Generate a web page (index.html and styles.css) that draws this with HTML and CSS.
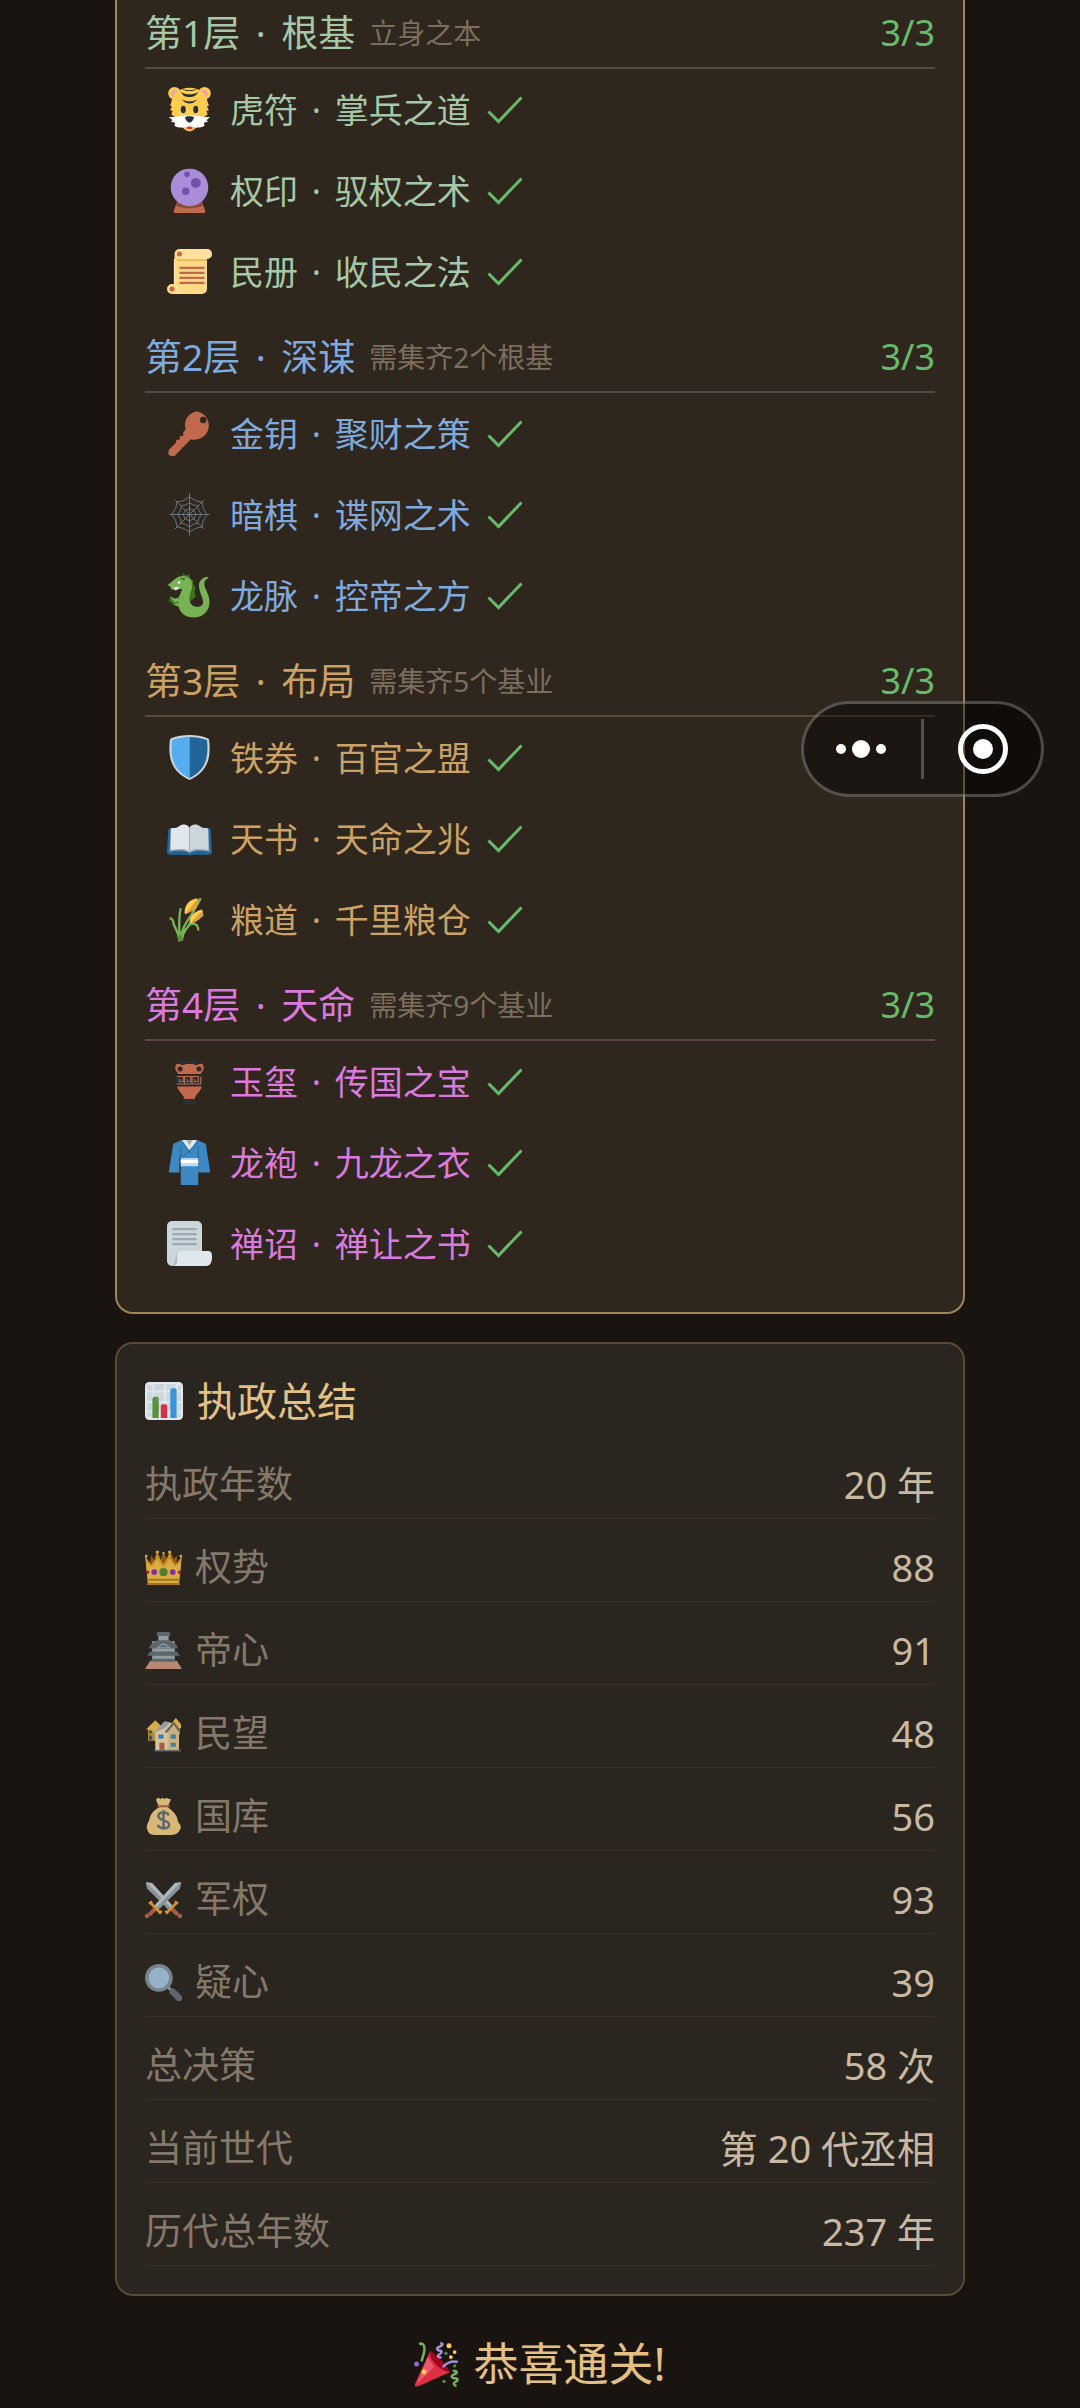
FILE: index.html
```html
<!DOCTYPE html>
<html lang="zh-CN">
<head>
<meta charset="utf-8">
<meta name="viewport" content="width=device-width, initial-scale=1">
<title>恭喜通关</title>
<link rel="stylesheet" href="styles.css">
</head>
<body>
<svg class="defs" aria-hidden="true">
  <symbol id="check" viewBox="0 0 36 28"><path d="M1.5 15.500 11.500 25.500 34.500 1.500" fill="none" stroke="currentColor" stroke-width="3"/></symbol>
  <symbol id="tiger" viewBox="0 0 36 36">
    <circle cx="6" cy="5" r="5" fill="#FFCC4D"/><circle cx="30" cy="5" r="5" fill="#FFCC4D"/>
    <circle cx="6.500" cy="5.500" r="3.300" fill="#E6AAAA"/><circle cx="29.500" cy="5.500" r="3.300" fill="#E6AAAA"/>
    <path d="M18 .5C10 .5 4.500 5 3.500 12L2.500 15l1.500.5-1.500 3 2 .5-1 3 3 2c3 6 8 11.500 11.500 11.500S26.500 30 29.500 24l3-2-1-3 2-.5-1.500-3 1.500-.5-1-3C31.500 5 26 .5 18 .5z" fill="#FFCC4D"/>
    <path d="M1.500 24C8 24 14 22.500 18 22.500S28 24 34.500 24l-3 2.500 1.500 1-3.500 1 .5 2.500C25 34 21 31.500 18 31.500S11 34 6 31l.5-2.500-3.500-1 1.500-1z" fill="#fff"/>
    <path d="M14.500 24.500c0-1.500 7-1.500 7 0S19 28.500 18 28.500s-3.500-2.500-3.500-4z" fill="#292F33"/>
    <path d="M15.500 33c1-2 4-2 5 0-1.500 1-3.500 1-5 0z" fill="#DD2E44"/>
    <ellipse cx="13" cy="18" rx="2" ry="3" fill="#292F33"/><ellipse cx="23" cy="18" rx="2" ry="3" fill="#292F33"/>
    <path d="M12 1c2 2 10 2 12 0-1 3-11 3-12 0zM11 4c4 2.500 10 2.500 14 0-2 3.500-4 4-7 4s-5-.5-7-4zm1 6c4 2 8 2 12 0-2 2.500-4 3.200-6 3.200s-4-.7-6-3.200z" fill="#292F33"/>
  </symbol>
  <symbol id="orb" viewBox="0 0 36 36">
    <path d="M8 27h20l2.500 7c.5 1 0 2-1 2h-23c-1 0-1.500-1-1-2z" fill="#C1694F"/><path d="M8 27h20l1 3c-7 3-15 3-22 0z" fill="#8A4B38"/>
    <circle cx="18" cy="15.500" r="15" fill="#AA8DD8"/><circle cx="16" cy="5" r="2.200" fill="#7450A8"/><circle cx="23" cy="12" r="4" fill="#7450A8"/><circle cx="15" cy="18.500" r="3" fill="#7450A8"/>
  </symbol>
  <symbol id="scroll" viewBox="0 0 36 36">
    <path d="M6 4a4 4 0 0 1 4-4h22a4 4 0 0 1 0 8v24a4 4 0 0 1-4 4H4a4 4 0 0 1 0-8h2z" fill="#FFD983"/>
    <path d="M10 0h22a4 4 0 0 1 0 8H10z" fill="#FFE8B6" opacity=".5"/><path d="M8 8h24v1.500H8z" fill="#E39F3D" opacity=".6"/>
    <circle cx="10" cy="4" r="2" fill="#C1694F"/><circle cx="4" cy="32" r="2" fill="#C1694F"/>
    <path d="M6 8v20c2 1 3 3 1.500 7" fill="none" stroke="#FFE8B6"/>
    <path d="M10 15h20M10 19h20M10 23h20M10 27h20" stroke="#C1694F" stroke-width="1.800"/>
  </symbol>
  <symbol id="key" viewBox="0 0 36 36">
    <path fill-rule="evenodd" d="M25 .5a10.500 10.500 0 0 0-10 14L13 17v3h-2.500l-.5 3H7.500L7 25.500 1.500 31 1 34.500 3 36h3l13-13.500A10.800 10.800 0 1 0 25 .5zm4 4a2.600 2.600 0 1 1 0 5.200 2.600 2.600 0 0 1 0-5.200z" fill="#C1694F"/>
  </symbol>
  <symbol id="web" viewBox="0 0 36 36">
    <g fill="none" stroke="#66757F" stroke-width=".8">
      <path d="M18 1v34M2 18h32M6.500 6.500l23 23M29.500 6.500l-23 23"/>
      <path d="M18 4q5 4 10 4 0 5 4 10-4 5-4 10-5 0-10 4-5-4-10-4 0-5-4-10 4-5 4-10 5 0 10-4zM18 8.500q3 2.500 6.500 2.500 0 3.500 3 7-3 3.500-3 7-3.500 0-6.500 3-3-3-6.500-3 0-3.500-3-7 3-3.500 3-7 3.500 0 6.500-2.500zM18 13q2 1.500 3.500 1.500 0 1.500 2 3.500-2 2-2 3.500-1.500 0-3.500 2-2-2-3.500-2 0-1.500-2-3.500 2-2 2-3.500 1.500 0 3.500-1.500z"/>
    </g>
  </symbol>
  <symbol id="dragon" viewBox="0 0 36 36">
    <path d="M9 4l1-2 2 1 1-3 2 2 3-1v3l3 2v3l2 3-1 3 1 4-7 6z" fill="#3E721D"/>
    <path d="M4 24c-1-1-3-1-3-3 1 0 1 1 2 1-1-1-1-2 0-3 2 1 4 1 6 3l1 5c-2 0-5-1-6-3z" fill="#3E721D"/>
    <path d="M.5 9C4 8 6 3 12 2.500c6-.5 9 4 8 9-.5 3-2.500 6-2 10 .5 4 4 6 7.500 5.500 3-.5 4-3 3-6-1-4-3-7-3-11 0-3 2-6 6.500-7l1.500 1c-3 1-4 3-3.500 6 .5 3 3.500 7 4 12 .5 7-4 13.500-12 13.500-9 0-13-5-13-12 0-6 3-8 3-11l-6 1c-2 0-3-1-3-2z" fill="#77B255"/>
    <path d="M5 11l5 .5-3 2.500z" fill="#fff"/><circle cx="9.500" cy="7.500" r="1" fill="#fff"/><path d="M10 4l5 0-1.500 2z" fill="#3E721D"/>
    <path d="M2 18.500l4 2 3-1 1 3-4 1zM5 25l4-1 1 3z" fill="#77B255"/>
  </symbol>
  <symbol id="shield" viewBox="0 0 36 36">
    <path d="M18 0C13 0 8 1 3.500 2.500c-.7.300-1 .7-1.200 1.500C.8 18 3 29 18 36 33 29 35.200 18 33.700 4c-.1-.8-.5-1.200-1.200-1.500C28 1 23 0 18 0z" fill="#CCD6DD"/>
    <path d="M18 1.500C13 1.500 9 2.300 4 4 2.500 18 5 28 18 34.500z" fill="#55ACEE"/><path d="M18 1.500c5 0 9 .8 14 2.500 1.500 14-1 24-14 30.500z" fill="#226699"/>
  </symbol>
  <symbol id="book" viewBox="0 0 36 36">
    <path d="M3 9.500 1 10.500 0 29q0 2 3 2h13q2 1 4 0h13q3 0 3-2L35 10.500l-2-1z" fill="#226699"/>
    <path d="M3 11.500c4-2 10-1 15 1v17c-5-2.500-10-2-16-1z" fill="#99AAB5"/><path d="M33 11.500c-4-2-10-1-15 1v17c5-2.500 10-2 16-1z" fill="#99AAB5"/>
    <path d="M3 10c2-1 4 0 6-1.500 4-3 8-1.500 9 1v19c-4-3-9-2-14-1.500-1 0-1-.5-1-1z" fill="#E1E8ED"/><path d="M33 10c-2-1-4 0-6-1.500-4-3-8-1.500-9 1v19c4-3 9-2 14-1.500 1 0 1-.5 1-1z" fill="#CCD6DD"/>
    <path d="M18 9.500v20" stroke="#99AAB5" stroke-width=".7"/>
  </symbol>
  <symbol id="grain" viewBox="0 0 36 36">
    <path d="M10 35C9 25 5 24 5 20c0-2-2-3-3-3M10 34c0-10-1-18 1-25M11 34c1-12 7-16 11-24l5-9M12 34c1-8 6-12 9-14l8-6M17 22c5-1 8-1 8 5" fill="none" stroke="#77B255" stroke-width="1.900"/>
    <path d="M8.500 31l3-1 1.500 5-4 1z" fill="#5C913B"/>
    <path d="M14 13C14 6 18 2 24 1c2 4-1 10-9 12.500zM18 21c0-6 4-9.500 10-11 2 4-2 9-9 11z" fill="#FFCC4D"/>
    <path d="M15 13C18 9 21 6 25 1c1 5-2 10-10 12zM19 21c3-4 6-7 10-10 0 5-3 8-10 10z" fill="#E39F3D"/>
  </symbol>
  <symbol id="amphora" viewBox="0 0 36 36">
    <path d="M12 1h12v3h-3v2h-6V4h-3zM13 32h10l1 4H12z" fill="#292F33"/>
    <path d="M15 4h6c1 1 3 1 5 0 3-1 4 2 3 5l-2 3H9L7 9C6 6 7 3 10 4c2 1 4 1 5 0zM8 22h20c-1 4-5 6-6 10h-8c-1-4-5-6-6-10z" fill="#C1694F"/>
    <circle cx="10.500" cy="8" r="2" fill="#2f251d"/><circle cx="25.500" cy="8" r="2" fill="#2f251d"/>
    <path d="M7.500 13h21v8h-21z" fill="#292F33"/>
    <path d="M8 14h5v4h-3v-2m-2 4h6v-6h5v4h-3v-2m-2 4h6v-6h5v4h-3v-2m-2 4h7v-6" fill="none" stroke="#C1694F" stroke-width=".9"/>
  </symbol>
  <symbol id="robe" viewBox="0 0 36 36">
    <path d="M12 0 5 3 1.500 25q0 1 1 1H10V14h15v12h8.500q1 0 1-1L31 3l-7-3z" fill="#3B88C3"/>
    <path d="M11 1h14v35H11z" fill="#3B88C3"/><path d="M12 0h12l-6 9z" fill="#E1E8ED"/><path d="M15.500 0h5L18 4z" fill="#99AAB5"/>
    <path d="M25 1.500 13 13M12 1.500l7 9M11 5v13M25 5v13" stroke="#226699" fill="none" stroke-width=".8"/>
    <path d="M11 14.500h14V21H11z" fill="#BBDDF5"/><path d="M11 16h14v2.500H11z" fill="#fff"/>
  </symbol>
  <symbol id="paper" viewBox="0 0 36 36">
    <path d="M28 4a4 4 0 0 0-4-4H4a4 4 0 0 0-4 4v28a4 4 0 0 0 4 4h24V4z" fill="#CCD6DD"/>
    <path d="M8 27q0-3 4-3h21c2 0 3 1.500 3 4s0 8-5 8H4c4-1 3-6 4-9z" fill="#E1E8ED"/><path d="M8 27q0-3 2-3c-4 0-2 9-6 12 6 0 4-6 4-9z" fill="#99AAB5" opacity=".6"/>
    <path d="M5 6.500h18M5 10.500h18M5 14.500h18M5 18.500h18" stroke="#99AAB5" stroke-width="1.800" stroke-linecap="round"/>
  </symbol>
  <symbol id="chart" viewBox="0 0 36 36">
    <rect width="36" height="36" rx="4" fill="#E1E8ED"/>
    <path d="M2 3h5v5H2zM9 2h9v6H9zM20 2h9v6h-9zM31 3h3v5h-3zM2 10h5v8H2zM9 10h9v8H9zM20 10h9v8h-9zM31 10h3v8h-3zM2 20h5v7H2zM9 20h9v7H9zM20 20h9v7h-9zM31 20h3v7h-3zM2 29h5v4H2zM31 29h3v4h-3z" fill="#CCD6DD"/>
    <path d="M7 34V16q0-2 2-2h2q2 0 2 2v18z" fill="#5C913B"/><path d="M15 34V23q0-2 2-2h2q2 0 2 2v11z" fill="#DD2E44"/><path d="M24 34V8q0-2 2-2h2q2 0 2 2v26z" fill="#3B94D9"/>
  </symbol>
  <symbol id="crown" viewBox="0 0 36 36">
    <path d="M5 14 6 6l3 5 2-7 4 7 3-8 4 8 3-8 3 7 3-4v10z" fill="#A56A12"/>
    <path d="M3 34 0 7l6 8 4-5 2-7 3 7 3 5 3-5 3-7 2 7 4 5 6-8-3 27z" fill="#F4A92D"/><path d="M3 34 1 13l6 4 5-7 6 8 6-8 5 7 6-4-2 21z" fill="#FFCC4D"/>
    <path d="M2 29h32v2H2zM2 33h32v2H2z" fill="#C8811C"/>
    <g fill="#FFCC4D"><circle cx="1" cy="7" r="1.400"/><circle cx="12" cy="3" r="1.600"/><circle cx="24" cy="3" r="1.600"/><circle cx="35" cy="7" r="1.400"/><circle cx="18" cy="4" r="1.200"/></g>
    <circle cx="18" cy="22.500" r="4" fill="#5C913B"/><circle cx="9" cy="22.500" r="2.700" fill="#9C2FB0"/><circle cx="27" cy="22.500" r="2.700" fill="#9C2FB0"/><circle cx="2.500" cy="22.500" r="1.700" fill="#BE1931"/><circle cx="33.500" cy="22.500" r="1.700" fill="#BE1931"/>
  </symbol>
  <symbol id="castle" viewBox="0 0 36 36">
    <path d="M5 28h26l5 8H0z" fill="#D79E84"/><path d="M7 9h22v20H7z" fill="#AAB8C2"/><path d="M13 2h10v8H13z" fill="#AAB8C2"/>
    <path d="M12 0h12l1 4H11zM12 8h12l7 5 1 3H4l1-3zM5 19h26l3 4H2zM7 26h22l1 3H6z" fill="#66757F"/>
    <path d="M11 15l7-4 7 4z" fill="#CCD6DD"/><path d="M13 14.500l5-2.500 5 2.500z" fill="#66757F"/>
  </symbol>
  <symbol id="houses" viewBox="0 0 36 36">
    <path d="M3 13h8v12H3zM26 10h8v9h-8z" fill="#D4A93B"/><path d="M1 14 10 5l7 7-6 5-3 0-4-3zM26 8l4-5 5 6v4h-5z" fill="#FFCC4D"/>
    <path d="M4 15h3v3H4zM4 20h3v4H4z" fill="#226699"/>
    <path d="M10 17 20 7l6 1 7 9v18H10z" fill="#FFE8B6"/><path d="M22 14l5-6 6 9v18H22z" fill="#F2CF8C"/>
    <path d="M9 17 19 6l6 1-6 6" fill="#AAB8C2"/><path d="M20 17l8-9 6 8" fill="none" stroke="#66757F" stroke-width="2"/>
    <path d="M13 19h5v4h-5zM25 19h5v4h-5zM25 27h5v4h-5z" fill="#3B94D9"/><path d="M14 27h5v7h-5z" fill="#C1694F"/><path d="M9 34h26v1.500H9z" fill="#66757F"/>
  </symbol>
  <symbol id="money" viewBox="0 0 36 36">
    <path d="M11 1q2-2 4 0 2-2 4 0 2-2 4 0 2-1 2 1l-3 7c6 4 10 9 10 14 2 2 4 5 2 8q-2 5-8 5H9q-6 0-7-6c-1-3 1-6 2-8 1-6 4-10 10-13l-3-6z" fill="#FDD888"/>
    <path d="M12 7h12v2H12z" fill="#BF6952"/>
    <path d="M23 17c-1-4-10-4-10 .5 0 5 10.500 3.500 10.500 8.500 0 4.500-10 4.500-11 0M18 12v19" fill="none" stroke="#67757F" stroke-width="2.400"/>
  </symbol>
  <symbol id="swords" viewBox="0 0 36 36">
    <g id="sword"><path d="M1 1l6 1 20 22-4 4L2 7z" fill="#CCD6DD"/><path d="M1 1l24 25-2 2L2 7z" fill="#99AAB5"/><path d="M26 27l6 6" stroke="#BF6952" stroke-width="4"/><path d="M22 30l8-8M20 29l2 3M29 20l3 2" stroke="#FFAC33" stroke-width="2.500"/><circle cx="34" cy="34" r="2.200" fill="#C1694F"/></g>
    <use href="#sword" transform="matrix(-1 0 0 1 36 0)"/>
  </symbol>
  <symbol id="lens" viewBox="0 0 36 36">
    <path d="M22 22l4 4" stroke="#99AAB5" stroke-width="3"/><path d="M27 27l6 6" stroke="#66757F" stroke-width="6.500" stroke-linecap="round"/>
    <circle cx="13.500" cy="13.500" r="13.500" fill="#8899A6"/><circle cx="13.500" cy="13.500" r="10" fill="#AED2EE"/>
  </symbol>
  <symbol id="party" viewBox="0 0 36 36">
    <path d="M13 7 1 33c-1 2 0 3 2 2.500L29 24z" fill="#DD2E44"/><path d="M13 7c5 3 12 10 16 17C22 24 11 14 13 7z" fill="#A0041E"/><path d="M11 12 2 34l14-14z" fill="#EA596E"/>
    <path d="M4 1.500c4-1 5 2 4 7l-2 7" fill="none" stroke="#77B255" stroke-width="2"/>
    <path d="M21 1c3 0 2 2-1 3s-1 3 1 3 1 2-1 3 0 3 2 2" fill="none" stroke="#AA8DD8" stroke-width="2"/>
    <path d="M23 20c4-4 8-5 12-4" fill="none" stroke="#AA8DD8" stroke-width="2"/>
    <path d="M31 23c4 0 4 2 1 3s-2 3 1 3 2 2 0 3-1 3 1 3" fill="none" stroke="#77B255" stroke-width="2"/>
    <circle cx="2" cy="17.500" r="2" fill="#9266CC"/><g fill="#FFCC4D"><circle cx="28" cy="3" r="2"/><circle cx="32.500" cy="8" r="1.500"/><circle cx="29.500" cy="12" r="1.500"/><circle cx="8" cy="24" r="2"/></g>
    <g fill="#5C913B"><circle cx="25.500" cy="9" r="1.300"/><circle cx="32.500" cy="19" r="1.300"/><circle cx="24" cy="31.500" r="1.300"/></g>
  </symbol>
</svg>

<main class="page">
  <section class="card legacy">
    <section class="tier tier-green">
      <header class="tier-head"><h2>第1层 <i>·</i> 根基</h2><small>立身之本</small><span class="count">3/3</span></header>
      <ul>
        <li><svg class="emoji"><use href="#tiger"/></svg><span>虎符 <i>·</i> 掌兵之道</span><svg class="check"><use href="#check"/></svg></li>
        <li><svg class="emoji"><use href="#orb"/></svg><span>权印 <i>·</i> 驭权之术</span><svg class="check"><use href="#check"/></svg></li>
        <li><svg class="emoji"><use href="#scroll"/></svg><span>民册 <i>·</i> 收民之法</span><svg class="check"><use href="#check"/></svg></li>
      </ul>
    </section>
    <section class="tier tier-blue">
      <header class="tier-head"><h2>第2层 <i>·</i> 深谋</h2><small>需集齐2个根基</small><span class="count">3/3</span></header>
      <ul>
        <li><svg class="emoji"><use href="#key"/></svg><span>金钥 <i>·</i> 聚财之策</span><svg class="check"><use href="#check"/></svg></li>
        <li><svg class="emoji"><use href="#web"/></svg><span>暗棋 <i>·</i> 谍网之术</span><svg class="check"><use href="#check"/></svg></li>
        <li><svg class="emoji"><use href="#dragon"/></svg><span>龙脉 <i>·</i> 控帝之方</span><svg class="check"><use href="#check"/></svg></li>
      </ul>
    </section>
    <section class="tier tier-gold">
      <header class="tier-head"><h2>第3层 <i>·</i> 布局</h2><small>需集齐5个基业</small><span class="count">3/3</span></header>
      <ul>
        <li><svg class="emoji"><use href="#shield"/></svg><span>铁券 <i>·</i> 百官之盟</span><svg class="check"><use href="#check"/></svg></li>
        <li><svg class="emoji"><use href="#book"/></svg><span>天书 <i>·</i> 天命之兆</span><svg class="check"><use href="#check"/></svg></li>
        <li><svg class="emoji"><use href="#grain"/></svg><span>粮道 <i>·</i> 千里粮仓</span><svg class="check"><use href="#check"/></svg></li>
      </ul>
    </section>
    <section class="tier tier-pink">
      <header class="tier-head"><h2>第4层 <i>·</i> 天命</h2><small>需集齐9个基业</small><span class="count">3/3</span></header>
      <ul>
        <li><svg class="emoji"><use href="#amphora"/></svg><span>玉玺 <i>·</i> 传国之宝</span><svg class="check"><use href="#check"/></svg></li>
        <li><svg class="emoji"><use href="#robe"/></svg><span>龙袍 <i>·</i> 九龙之衣</span><svg class="check"><use href="#check"/></svg></li>
        <li><svg class="emoji"><use href="#paper"/></svg><span>禅诏 <i>·</i> 禅让之书</span><svg class="check"><use href="#check"/></svg></li>
      </ul>
    </section>
  </section>

  <section class="card summary">
    <h2 class="summary-title"><svg class="emoji"><use href="#chart"/></svg>执政总结</h2>
    <dl>
      <div class="row"><dt>执政年数</dt><dd>20 年</dd></div>
      <div class="row"><dt><svg class="emoji"><use href="#crown"/></svg>权势</dt><dd>88</dd></div>
      <div class="row"><dt><svg class="emoji"><use href="#castle"/></svg>帝心</dt><dd>91</dd></div>
      <div class="row"><dt><svg class="emoji"><use href="#houses"/></svg>民望</dt><dd>48</dd></div>
      <div class="row"><dt><svg class="emoji"><use href="#money"/></svg>国库</dt><dd>56</dd></div>
      <div class="row"><dt><svg class="emoji"><use href="#swords"/></svg>军权</dt><dd>93</dd></div>
      <div class="row"><dt><svg class="emoji"><use href="#lens"/></svg>疑心</dt><dd>39</dd></div>
      <div class="row"><dt>总决策</dt><dd>58 次</dd></div>
      <div class="row"><dt>当前世代</dt><dd>第 20 代丞相</dd></div>
      <div class="row"><dt>历代总年数</dt><dd>237 年</dd></div>
    </dl>
  </section>

  <p class="congrats"><svg class="emoji"><use href="#party"/></svg>恭喜通关!</p>
</main>

<nav class="capsule" aria-label="小程序">
  <button type="button" aria-label="更多"><svg viewBox="0 0 50 50"><g fill="#fff"><circle cx="5" cy="25" r="5"/><circle cx="25" cy="25" r="9"/><circle cx="45" cy="25" r="5"/></g></svg></button>
  <button type="button" aria-label="关闭"><svg viewBox="0 0 50 50"><circle cx="25" cy="25" r="22.500" fill="none" stroke="#fff" stroke-width="5"/><circle cx="25" cy="25" r="10" fill="#fff"/></svg></button>
</nav>
</body>
</html>
```
FILE: styles.css
```css
* {
  box-sizing: border-box;
  margin: 0;
  padding: 0;
}

body {
  background: #1a1411;
  color: #c9b9a3;
  font-family: "Noto Sans", "Noto Sans CJK SC", sans-serif;
  font-weight: 400;
}

.defs {
  display: none;
}

h2,
small,
dt,
dd {
  font-weight: inherit;
}

/* separator dot */
i {
  margin: 0 5px;
  font-style: normal;
}

h2 i {
  margin: 0 6px;
}

ul {
  list-style: none;
}

.page {
  display: flex;
  flex-direction: column;
  gap: 28px;
  padding: 0 115px;
}

.card {
  padding: 0 28px 28px;
  border: 2px solid #5a4a37;
  border-radius: 18px;
  background: #2b2520;
}

.legacy {
  border-color: #a08459;
  border-top: 0;
  border-radius: 0 0 18px 18px;
  background: #2f261e;
}

/* tiers */
.tier-head {
  display: flex;
  align-items: center;
  gap: 14px;
  padding: 18px 0 7px;
  border-bottom: 2px solid;
  line-height: 54px;
}

.tier:first-child .tier-head {
  padding-top: 6px;
}

.tier-head h2 {
  color: var(--tone);
  font-size: 37px;
}

.tier-head small {
  color: #7c6e5e;
  font-size: 28px;
}

.count {
  margin-left: auto;
  color: #66bb6a;
  font-size: 36px;
}

.tier-green { --tone: #a5c8a8; }
.tier-green .tier-head { border-color: #534f43; }
.tier-blue { --tone: #7eaade; }
.tier-blue .tier-head { border-color: #4c4a48; }
.tier-gold { --tone: #cba264; }
.tier-gold .tier-head { border-color: #5b4835; }
.tier-pink { --tone: #da7ade; }
.tier-pink .tier-head { border-color: #5f4549; }

.tier li {
  display: flex;
  align-items: center;
  height: 81px;
  padding-left: 22px;
  color: var(--tone);
  font-size: 34px;
  line-height: 54px;
}

.tier .emoji {
  width: 45px;
  height: 45px;
  margin-right: 18px;
}

.check {
  width: 36px;
  height: 28px;
  margin-left: 16px;
  color: #66bb6a;
}

/* summary */
.summary {
  padding-top: 25px;
}

.summary-title {
  display: flex;
  align-items: center;
  gap: 14px;
  padding-bottom: 3px;
  color: #e3c084;
  font-size: 40px;
  line-height: 64px;
}

.summary-title .emoji {
  width: 38px;
  height: 38px;
}

.row {
  display: flex;
  justify-content: space-between;
  padding: 22px 0 8px;
  border-bottom: 1px solid #3a2d27;
  line-height: 52px;
}

.row dt {
  display: flex;
  align-items: center;
  gap: 13px;
  color: #85786a;
  font-size: 37px;
}

.row dd {
  font-size: 38px;
}

.row .emoji {
  width: 37px;
  height: 37px;
  opacity: .82;
}

.congrats {
  display: flex;
  align-items: center;
  justify-content: center;
  gap: 14px;
  padding: 10px 0;
  color: #e3c084;
  font-size: 45px;
  line-height: 60px;
}

.congrats .emoji {
  width: 45px;
  height: 45px;
}

/* floating mini-program menu */
.capsule {
  position: fixed;
  top: 701px;
  right: 36px;
  display: flex;
  align-items: center;
  padding: 15px 0;
  border: 3px solid rgba(255, 255, 255, .25);
  border-radius: 48px;
  background: rgba(0, 0, 0, .4);
}

.capsule button {
  display: flex;
  align-items: center;
  justify-content: center;
  width: 117px;
  height: 60px;
  padding-right: 3px;
  border: 0;
  background: none;
}

.capsule button + button {
  width: 120px;
  padding-right: 0;
  border-left: 3px solid rgba(255, 255, 255, .25);
}

.capsule svg {
  width: 50px;
  height: 50px;
}
```
